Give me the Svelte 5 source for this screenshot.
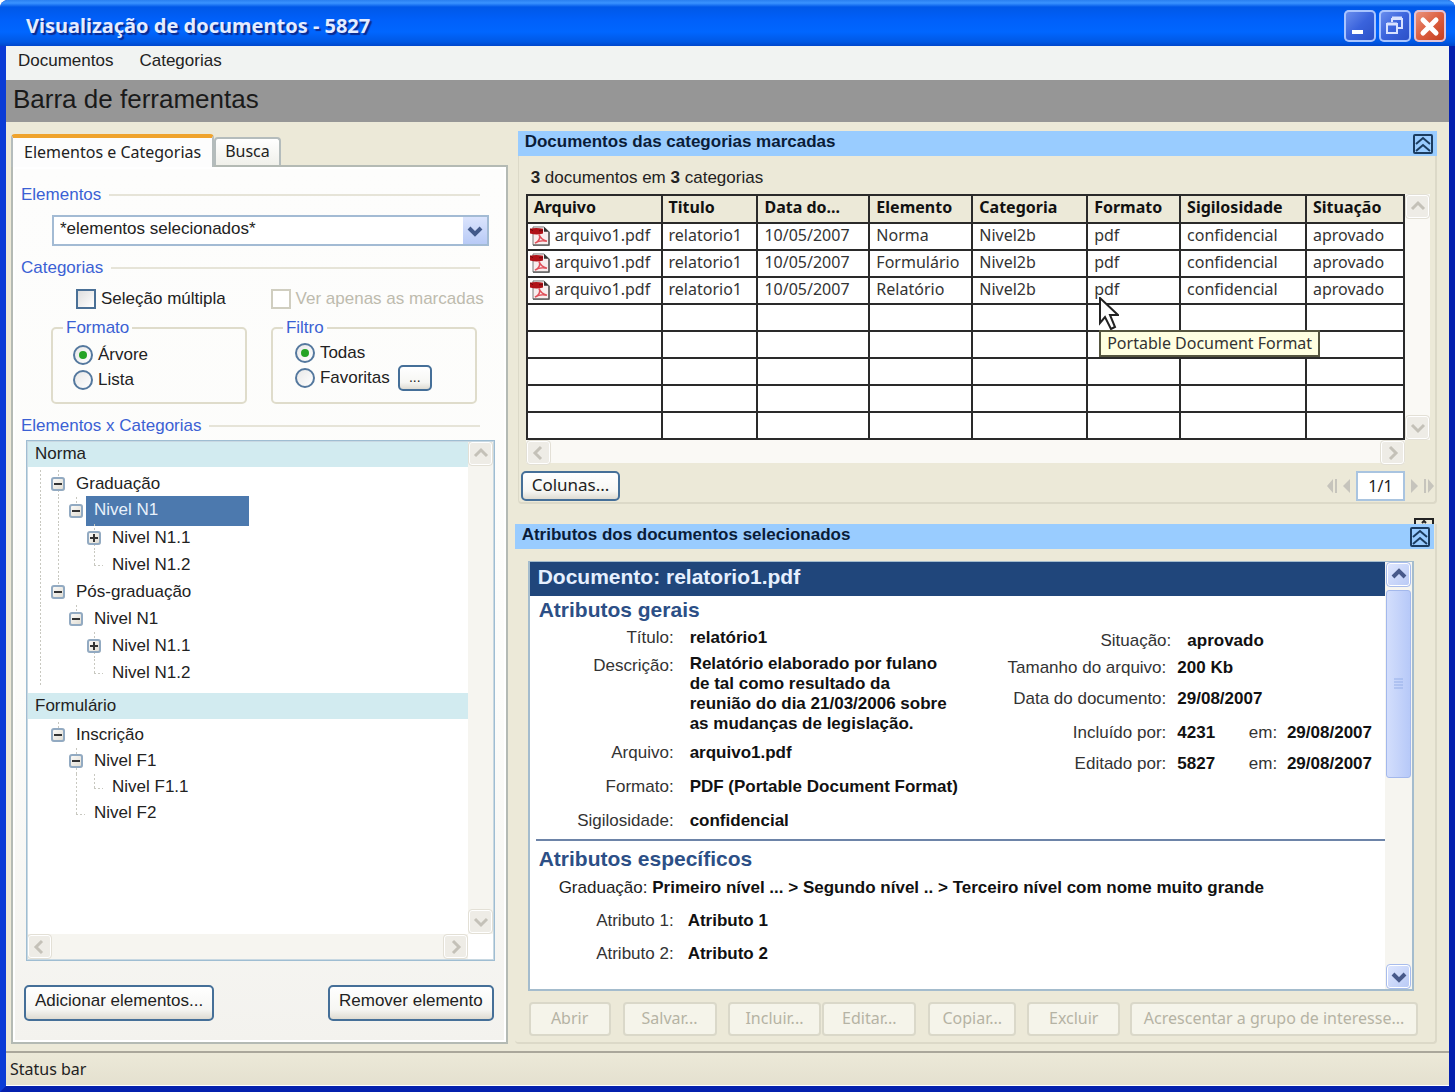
<script>
  const menus = ["Documentos", "Categorias"];

  // guide codes: "|" line, "L" corner, "m"/"p" toggle, "M"/"P" toggle whose line goes on below
  const groups = [
    {
      name: "Norma",
      rows: [
        { guides: "|M", label: "Graduação" },
        { guides: "||m", label: "Nivel N1", selected: true },
        { guides: "|| P", label: "Nivel N1.1" },
        { guides: "|| L", label: "Nivel N1.2" },
        { guides: "|m", label: "Pós-graduação" },
        { guides: "| m", label: "Nivel N1" },
        { guides: "|  P", label: "Nivel N1.1" },
        { guides: "|  L", label: "Nivel N1.2" },
      ],
    },
    {
      name: "Formulário",
      compact: true,
      rows: [
        { guides: " m", label: "Inscrição" },
        { guides: "  M", label: "Nivel F1" },
        { guides: "  |L", label: "Nivel F1.1" },
        { guides: "  L", label: "Nivel F2" },
      ],
    },
  ];

  const columns = [
    { title: "Arquivo", width: 135 },
    { title: "Titulo", width: 96 },
    { title: "Data do...", width: 112 },
    { title: "Elemento", width: 103 },
    { title: "Categoria", width: 115 },
    { title: "Formato", width: 93 },
    { title: "Sigilosidade", width: 126 },
    { title: "Situação", width: 98 },
  ];
  const totalWidth = columns.reduce((sum, c) => sum + c.width, 0);

  const docs = ["Norma", "Formulário", "Relatório"].map((elemento) => [
    "arquivo1.pdf",
    "relatorio1",
    "10/05/2007",
    elemento,
    "Nivel2b",
    "pdf",
    "confidencial",
    "aprovado",
  ]);
  const emptyRows = [1, 2, 3, 4, 5];

  const actions = [
    { label: "Abrir", width: 82, gap: 12 },
    { label: "Salvar...", width: 94, gap: 11 },
    { label: "Incluir...", width: 94, gap: 1 },
    { label: "Editar...", width: 94, gap: 12 },
    { label: "Copiar...", width: 88, gap: 11 },
    { label: "Excluir", width: 93, gap: 10 },
    { label: "Acrescentar a grupo de interesse...", width: 288, gap: 0 },
  ];

  let multiple = $state(false);
  let format = $state("arvore");
  let filter = $state("todas");
  let page = $state("1/1");

  const arrows = {
    up: "M6 14l6-6 6 6",
    down: "M6 9l6 6 6-6",
    left: "M14 6l-6 6 6 6",
    right: "M9 6l6 6-6 6",
  };
</script>

{#snippet scrollButton(dir, active)}
  <button class="scroll-btn" class:active aria-label={"Rolar " + dir}>
    <svg width="24" height="24" viewBox="0 0 24 24"><path d={arrows[dir]} /></svg>
  </button>
{/snippet}

{#snippet collapse()}
  <button class="collapse" aria-label="Recolher">
    <svg width="20" height="20" viewBox="0 0 20 20">
      <rect x="1" y="1" width="18" height="18" rx="1" />
      <path d="M3 10l7-6 7 6M3 17l7-6 7 6" />
    </svg>
  </button>
{/snippet}

{#snippet guide(code)}
  {#if "mMpP".includes(code)}
    <span class="cell toggle-cell" class:below={code === "M" || code === "P"}>
      <button class="toggle" aria-label="Expandir ou recolher">
        <svg width="14" height="14" viewBox="0 0 14 14">
          <path d={code.toLowerCase() === "p" ? "M3 7h8M7 3v8" : "M3 7h8"} />
        </svg>
      </button>
    </span>
  {:else}
    <span class="cell" class:line={code === "|"} class:corner={code === "L"}></span>
  {/if}
{/snippet}

{#snippet pdfIcon()}
  <svg class="pdf" width="21" height="20" viewBox="0 0 21 21" preserveAspectRatio="none">
    <path d="M4 1h11l5 5v14H4z" fill="#f8eeee" stroke="#777" />
    <path d="M20 6v14H4" fill="none" stroke="#555" stroke-width="1.4" />
    <path d="M15 1l5 5h-5z" fill="#333" />
    <path d="M1 3q6-2 13 0v5q-6 2-13 0z" fill="#b01218" />
    <path d="M1 3l3 2M10 5h4" stroke="#6d0a0d" />
    <path d="M10 9c2 3 0 7-4 9 4-3 8-3 12-2-4-1-7-4-8-7z" fill="none" stroke="#e0525c" stroke-width="1.6" />
  </svg>
{/snippet}

<div class="window">
  <header class="titlebar">
    <h1>Visualização de documentos - 5827</h1>
    <button class="win-btn" aria-label="Minimizar">
      <svg width="32" height="32" viewBox="0 0 32 32"><path d="M8 22h11" stroke="#fff" stroke-width="4" /></svg>
    </button>
    <button class="win-btn" aria-label="Restaurar">
      <svg width="32" height="32" viewBox="0 0 32 32" fill="none" stroke="#d8e2ff">
        <path d="M13 12V9h10v9h-4" stroke-width="2" />
        <path d="M13 8h10" stroke-width="3" />
        <rect x="8" y="14" width="10" height="9" stroke-width="2" />
        <path d="M8 14h10" stroke-width="3" />
      </svg>
    </button>
    <button class="win-btn close" aria-label="Fechar">
      <svg width="32" height="32" viewBox="0 0 32 32"><path d="M9 10l13 13M22 10L9 23" stroke="#fff" stroke-width="5" stroke-linecap="round" /></svg>
    </button>
  </header>

  <nav class="menubar">
    {#each menus as menu}
      <button>{menu}</button>
    {/each}
  </nav>
  <div class="toolbar">Barra de ferramentas</div>

  <main>
    <aside>
      <div class="tabs" role="tablist">
        <button class="tab current" role="tab" aria-selected="true">Elementos e Categorias</button>
        <button class="tab" role="tab" aria-selected="false">Busca</button>
      </div>
      <div class="tab-panel">
        <h2 class="group-title"><label for="elementos">Elementos</label></h2>
        <div class="select">
          <select id="elementos">
            <option>*elementos selecionados*</option>
          </select>
          <svg width="24" height="27" viewBox="0 0 24 27"><path d="M6 11l6 6 6-6" /></svg>
        </div>

        <h2 class="group-title">Categorias</h2>
        <div class="checks">
          <label><input type="checkbox" bind:checked={multiple} />Seleção múltipla</label>
          <label class="off"><input type="checkbox" disabled />Ver apenas as marcadas</label>
        </div>
        <div class="boxes">
          <fieldset class="format">
            <legend>Formato</legend>
            <label><input type="radio" value="arvore" bind:group={format} />Árvore</label>
            <label><input type="radio" value="lista" bind:group={format} />Lista</label>
          </fieldset>
          <fieldset class="filter">
            <legend>Filtro</legend>
            <label><input type="radio" value="todas" bind:group={filter} />Todas</label>
            <div class="favorites">
              <label><input type="radio" value="favoritas" bind:group={filter} />Favoritas</label>
              <button class="btn more">...</button>
            </div>
          </fieldset>
        </div>

        <h2 class="group-title">Elementos x Categorias</h2>
        <div class="tree">
          <div class="tree-body">
            {#each groups as group}
              <h3>{group.name}</h3>
              <ul class:compact={group.compact}>
                {#each group.rows as row}
                  <li>
                    {#each row.guides as code}
                      {@render guide(code)}
                    {/each}
                    <span class="node" class:selected={row.selected}>{row.label}</span>
                  </li>
                {/each}
              </ul>
            {/each}
          </div>
          <div class="vscroll">
            {@render scrollButton("up", false)}
            {@render scrollButton("down", false)}
          </div>
          <div class="hscroll">
            {@render scrollButton("left", false)}
            {@render scrollButton("right", false)}
          </div>
        </div>

        <div class="tree-actions">
          <button class="btn">Adicionar elementos...</button>
          <button class="btn">Remover elemento</button>
        </div>
      </div>
    </aside>

    <div class="content">
      <section class="documents">
        <header class="bar">
          <h2>Documentos das categorias marcadas</h2>
          {@render collapse()}
        </header>
        <p class="count"><b>3</b> documentos em <b>3</b> categorias</p>
        <div class="grid">
          <table>
            <colgroup>
              {#each columns as col}
                <col style="width: {(col.width / totalWidth) * 100}%" />
              {/each}
            </colgroup>
            <thead>
              <tr>
                {#each columns as col}
                  <th>{col.title}</th>
                {/each}
              </tr>
            </thead>
            <tbody>
              {#each docs as doc, r}
                <tr>
                  {#each doc as value, c}
                    <td class:file={c === 0} class:hovered={r === 2 && c === 5}>
                      {#if c === 0}{@render pdfIcon()}{/if}{value}
                      {#if r === 2 && c === 5}
                        <svg class="cursor" width="20" height="33" viewBox="0 0 20 33">
                          <path d="M1 1v25l5-6 6 12 4-2-5-12h8z" />
                        </svg>
                        <span class="tooltip" role="tooltip">Portable Document Format</span>
                      {/if}
                    </td>
                  {/each}
                </tr>
              {/each}
              {#each emptyRows as n}
                <tr>
                  {#each columns as col}
                    <td></td>
                  {/each}
                </tr>
              {/each}
            </tbody>
          </table>
          <div class="vscroll">
            {@render scrollButton("up", false)}
            {@render scrollButton("down", false)}
          </div>
          <div class="hscroll">
            {@render scrollButton("left", false)}
            {@render scrollButton("right", false)}
          </div>
        </div>
        <footer class="grid-footer">
          <button class="btn columns">Colunas...</button>
          <div class="pager">
            <button aria-label="Primeira">
              <svg width="10" height="14" viewBox="0 0 10 14"><path d="M6 0v14L0 7zM8 0h2v14H8z" /></svg>
            </button>
            <button aria-label="Anterior">
              <svg width="7" height="14" viewBox="0 0 7 14"><path d="M7 0v14L0 7z" /></svg>
            </button>
            <input aria-label="Página" bind:value={page} />
            <button aria-label="Próxima">
              <svg width="7" height="14" viewBox="0 0 7 14"><path d="M0 0v14l7-7z" /></svg>
            </button>
            <button aria-label="Última">
              <svg width="10" height="14" viewBox="0 0 10 14"><path d="M0 0h2v14H0zM4 0v14l6-7z" /></svg>
            </button>
          </div>
        </footer>
      </section>

      <section class="attributes">
        <svg class="tucked" width="20" height="6" viewBox="0 0 20 6">
          <path d="M1 6V1h18v5M8 5l2-2 2 2" />
        </svg>
        <header class="bar">
          <h2>Atributos dos documentos selecionados</h2>
          {@render collapse()}
        </header>
        <div class="viewer">
          <div class="sheet">
            <h3>Documento: relatorio1.pdf</h3>
            <h4>Atributos gerais</h4>
            <div class="general">
              <dl class="main-attrs">
                <dt>Título:</dt><dd>relatório1</dd>
                <dt>Descrição:</dt>
                <dd class="long">Relatório elaborado por fulano de tal como resultado da reunião do dia 21/03/2006 sobre as mudanças de legislação.</dd>
                <dt>Arquivo:</dt><dd>arquivo1.pdf</dd>
                <dt>Formato:</dt><dd>PDF (Portable Document Format)</dd>
                <dt>Sigilosidade:</dt><dd>confidencial</dd>
              </dl>
              <div class="side-attrs">
                <dl class="status"><dt>Situação:</dt><dd>aprovado</dd></dl>
                <dl>
                  <dt>Tamanho do arquivo:</dt><dd>200 Kb</dd>
                  <dt>Data do documento:</dt><dd>29/08/2007</dd>
                  <dt>Incluído por:</dt><dd>4231 <span>em:</span> 29/08/2007</dd>
                  <dt>Editado por:</dt><dd>5827 <span>em:</span> 29/08/2007</dd>
                </dl>
              </div>
            </div>
            <hr />
            <h4>Atributos específicos</h4>
            <p class="path">Graduação: <b>Primeiro nível ... &gt; Segundo nível .. &gt; Terceiro nível com nome muito grande</b></p>
            <dl class="specific">
              <dt>Atributo 1:</dt><dd>Atributo 1</dd>
              <dt>Atributo 2:</dt><dd>Atributo 2</dd>
            </dl>
          </div>
          <div class="vscroll">
            {@render scrollButton("up", true)}
            <div class="thumb">
              <svg width="10" height="12" viewBox="0 0 10 12"><path d="M0 1h9M0 4h9M0 7h9M0 10h9" /></svg>
            </div>
            {@render scrollButton("down", true)}
          </div>
        </div>
        <footer class="actions">
          {#each actions as action}
            <button disabled style="flex: {action.width} 1 {action.width}px; margin-right: {action.gap}px">{action.label}</button>
          {/each}
        </footer>
      </section>
    </div>
  </main>

  <footer class="statusbar">Status bar</footer>
</div>

<style>
  :global(body) {
    margin: 0;
    background: #fff;
  }

  .window {
    --ui: "Noto Sans", "Open Sans", sans-serif;
    box-sizing: border-box;
    display: flex;
    flex-direction: column;
    min-height: 100vh;
    border: solid #0a3bd6;
    border-width: 0 6px 6px;
    border-right-color: #0420ae;
    border-bottom-color: #0420ae;
    border-radius: 8px 8px 0 0;
    background: #ece9d8;
    color: #222;
    font: 17px/20px "Liberation Sans", Arial, sans-serif;
  }

  .window :global(*) {
    box-sizing: border-box;
  }

  h1, h2, h3, h4, p, ul, dl, dd {
    margin: 0;
    padding: 0;
  }

  button, input, select {
    margin: 0;
    padding: 0;
    border: 0;
    background: none;
    color: inherit;
    font: inherit;
  }

  svg {
    display: block;
    flex: none;
  }

  .titlebar {
    display: flex;
    align-items: center;
    gap: 3px;
    height: 46px;
    margin: 0 -6px;
    padding: 6px 9px 0 26px;
    border-radius: 8px 8px 0 0;
    background: linear-gradient(#2a7ff0 0, #3a93ff 3px, #0058e8 7px, #0060fa 20px, #0066ff 32px, #0058e4 42px, #0047cc 46px);
  }

  .titlebar h1 {
    flex: 1;
    color: #e4ecff;
    font: bold 20px/28px var(--ui);
    text-shadow: 2px 2px 1px #0a2a90;
  }

  .win-btn {
    width: 32px;
    height: 32px;
    border-radius: 5px;
    background: linear-gradient(135deg, #6f93f0, #3a63dc 50%, #2a4ec4);
    box-shadow: inset 0 0 0 2px #a8c4ff;
  }

  .win-btn.close {
    background: linear-gradient(135deg, #ec9a84, #dc5f40 50%, #c03a1c);
    box-shadow: inset 0 0 0 2px #e0c4d8;
  }

  .menubar {
    display: flex;
    gap: 26px;
    height: 34px;
    padding: 0 12px 4px;
    background: #f1f3f2;
  }

  .toolbar {
    height: 42px;
    padding-left: 7px;
    background: #969696;
    color: #1a1a1a;
    font-size: 26px;
    line-height: 39px;
  }

  main {
    flex: 1;
    display: grid;
    grid-template-columns: 35fr 65fr;
    gap: 7px;
    padding: 9px 12px 7px 5px;
  }

  aside {
    display: flex;
    flex-direction: column;
    padding-top: 3px;
  }

  .tabs {
    display: flex;
    align-items: flex-end;
  }

  .tab {
    height: 28px;
    padding: 0 9px 2px;
    border: 2px solid #b4bcbc;
    border-bottom: 0;
    border-radius: 4px 4px 0 0;
    background: linear-gradient(#fff, #f0f0ea);
    font: 16px/22px var(--ui);
  }

  .tab.current {
    position: relative;
    height: 33px;
    margin-bottom: -2px;
    padding: 0 11px 2px;
    border-top: 4px solid #efa32c;
    background: #fdfdfd;
  }

  .tab-panel {
    flex: 1;
    display: flex;
    flex-direction: column;
    padding: 18px 11px 21px 8px;
    border: 2px solid #b4bab4;
    background: linear-gradient(#fdfdfc, #fcfcfa 60%, #f3f2ee);
    box-shadow: inset 0 0 0 2px #fff;
  }

  .group-title {
    display: flex;
    align-items: center;
    gap: 8px;
    margin-right: 15px;
    color: #3b61d4;
    font-size: 17px;
    font-weight: normal;
    line-height: 20px;
  }

  .group-title::after {
    content: "";
    flex: 1;
    border-top: 2px solid #e6e4d8;
  }

  .select {
    position: relative;
    margin: 10px 6px 12px 31px;
  }

  .select select {
    width: 100%;
    height: 31px;
    padding: 0 30px 3px 6px;
    border: 2px solid #a3bbd4;
    background: #fff;
    appearance: none;
  }

  .select svg {
    position: absolute;
    top: 2px;
    right: 2px;
    background: linear-gradient(#dbe4fd, #b8caf6);
    pointer-events: none;
  }

  .select path {
    fill: none;
    stroke: #42598a;
    stroke-width: 4;
  }

  .checks, .checks label, .boxes label {
    display: flex;
    align-items: center;
  }

  .checks {
    justify-content: space-between;
    margin: 11px 11px 9px 55px;
  }

  .checks label {
    gap: 5px;
  }

  .checks .off {
    color: #bdbbae;
  }

  input[type="checkbox"] {
    width: 20px;
    height: 20px;
    border: 2px solid #4a7096;
    background: linear-gradient(135deg, #dedede, #fff);
    appearance: none;
  }

  input[type="checkbox"]:disabled {
    border-color: #d0cec0;
    background: #fff;
  }

  input[type="checkbox"]:checked {
    background: #21a121;
  }

  .boxes {
    display: flex;
    gap: 24px;
    margin: 0 18px 12px 30px;
  }

  fieldset {
    flex: 196;
    height: 86px;
    min-width: 0;
    margin: 0;
    padding: 4px 0 0 20px;
    border: 2px solid #dfdccb;
    border-radius: 5px;
  }

  .filter {
    flex: 205;
    padding: 2px 0 0 22px;
  }

  legend {
    margin-left: -10px;
    padding: 0 3px;
    color: #3b61d4;
  }

  .filter legend {
    margin-left: -12px;
  }

  .boxes label {
    gap: 5px;
    height: 25px;
  }

  .favorites {
    display: flex;
    align-items: center;
    gap: 8px;
    height: 25px;
  }

  input[type="radio"] {
    display: grid;
    place-items: center;
    width: 20px;
    height: 20px;
    border: 2px solid #54789e;
    border-radius: 50%;
    background: linear-gradient(135deg, #e8e8e8, #fff);
    appearance: none;
  }

  input[type="radio"]:checked::before {
    content: "";
    width: 8px;
    height: 8px;
    border-radius: 50%;
    background: #25a325;
  }

  .btn {
    height: 36px;
    padding: 0 9px 4px;
    border: 2px solid #456f98;
    border-radius: 5px;
    background: linear-gradient(#fff, #f6f6f3 70%, #dedbd2);
  }

  .btn.more {
    width: 34px;
    height: 26px;
    padding: 0 0 6px;
    font-size: 14px;
  }

  .tree {
    flex: 1;
    display: grid;
    grid-template: 1fr 26px / 1fr 26px;
    margin: 4px 0 0 5px;
    border: 1px solid #9fbdd2;
    outline: 1px solid #c8d8e2;
    outline-offset: -2px;
    background: #fff;
  }

  .tree h3 {
    height: 26px;
    padding-left: 8px;
    background: #d2ebf0;
    font-size: 17px;
    font-weight: normal;
    line-height: 25px;
  }

  .tree ul {
    padding: 3px 0 7px 4px;
    list-style: none;
  }

  .tree li {
    display: flex;
    align-items: center;
    height: 27px;
  }

  .tree .compact li {
    height: 26px;
  }

  .cell {
    align-self: stretch;
    display: grid;
    place-items: center;
    width: 18px;
    background: repeating-linear-gradient(#c8c8c0 0 2px, transparent 2px 4px) center / 1px 100% no-repeat;
  }

  .cell:not(.line):not(.corner):not(.toggle-cell) {
    background: none;
  }

  .cell.corner {
    background:
      repeating-linear-gradient(#c8c8c0 0 2px, transparent 2px 4px) 9px 0 / 1px 14px no-repeat,
      repeating-linear-gradient(90deg, #c8c8c0 0 2px, transparent 2px 4px) 9px 14px / 9px 1px no-repeat;
  }

  .toggle-cell {
    background-position: 9px 0;
    background-size: 1px 13px;
  }

  .toggle-cell.below {
    background-size: 1px 100%;
  }

  .toggle {
    width: 14px;
    height: 14px;
    border-radius: 3px;
    background: linear-gradient(135deg, #fff, #ddd8cc);
    box-shadow: inset 0 0 0 2px #92aac2;
  }

  .toggle path {
    stroke: #333;
    stroke-width: 2;
  }

  .node {
    display: flex;
    align-items: center;
    padding-left: 9px;
  }

  .node.selected {
    width: 163px;
    height: 30px;
    margin-left: 1px;
    padding: 0 0 2px 8px;
    background: #4c79ae;
    color: #e8f1fb;
  }

  .tree-actions {
    display: flex;
    justify-content: space-between;
    margin: 24px 1px 0 3px;
  }

  .vscroll, .hscroll {
    display: flex;
    justify-content: space-between;
    background: #f6f5f0;
  }

  .vscroll {
    flex-direction: column;
  }

  .scroll-btn {
    display: grid;
    place-items: center;
    width: 25px;
    height: 25px;
    border: 1px solid #e3e0d6;
    border-radius: 4px;
    background: #eeece6;
    box-shadow: inset 0 0 0 1px #fff;
  }

  .scroll-btn path {
    fill: none;
    stroke: #c4c1b8;
    stroke-width: 3;
  }

  .scroll-btn.active {
    border-color: #a8bcec;
    background: linear-gradient(135deg, #dfe7ff, #b8c9f5);
  }

  .scroll-btn.active path {
    stroke: #47598a;
    stroke-width: 4;
  }

  .content {
    display: flex;
    flex-direction: column;
    gap: 20px;
    min-width: 0;
  }

  .documents {
    margin-left: 3px;
    box-shadow: inset 1px 0 0 #dcd9c8;
  }

  .documents, .attributes {
    border: solid #dcd9c8;
    border-width: 0 2px 2px 0;
    border-radius: 0 0 4px 4px;
  }

  .attributes {
    position: relative;
    flex: 1;
    display: flex;
    flex-direction: column;
  }

  .bar {
    display: flex;
    align-items: center;
    justify-content: space-between;
    height: 25px;
    margin-right: -2px;
    padding: 0 4px 0 7px;
    background: #99ccff;
  }

  .attributes .bar {
    position: relative;
    margin-right: 1px;
  }

  .bar h2 {
    padding-bottom: 3px;
    color: #0a1c38;
    font-size: 17px;
    line-height: 20px;
  }

  .collapse rect, .collapse path {
    fill: none;
    stroke: #1b3c60;
    stroke-width: 2;
  }

  .tucked {
    position: absolute;
    top: -6px;
    right: 1px;
  }

  .tucked path {
    fill: none;
    stroke: #222;
    stroke-width: 2;
  }

  .count {
    padding: 12px 13px 6px;
  }

  .grid {
    display: grid;
    grid-template: auto 23px / 1fr 25px;
    margin: 0 5px 0 8px;
  }

  table {
    width: 100%;
    border-collapse: collapse;
    table-layout: fixed;
    font: 16px/20px var(--ui);
  }

  th, td {
    height: 27px;
    padding: 0 0 4px 6px;
    border: 2px solid #2a2a2a;
    text-align: left;
    white-space: nowrap;
  }

  td {
    background: #fff;
    color: #333;
  }

  th {
    height: 28px;
    color: #111;
  }

  td.file {
    padding: 0 0 2px 1px;
  }

  .pdf {
    display: inline-block;
    margin-right: 5px;
    vertical-align: -5px;
  }

  td.hovered {
    position: relative;
  }

  .cursor {
    position: absolute;
    z-index: 2;
    top: 19px;
    left: 11px;
  }

  .cursor path {
    fill: #fff;
    stroke: #222;
    stroke-width: 2;
  }

  .tooltip {
    position: absolute;
    z-index: 1;
    top: 52px;
    left: 11px;
    height: 27px;
    padding: 0 6px;
    border: 2px solid #55553f;
    background: #ffffe1;
    line-height: 22px;
  }

  .grid .hscroll, .grid .vscroll {
    background: #faf9f5;
  }

  .grid-footer {
    display: flex;
    align-items: center;
    justify-content: space-between;
    padding: 8px 1px 1px 3px;
  }

  .columns {
    height: 30px;
    padding: 0 9px 2px;
    font: 17px/22px var(--ui);
  }

  .pager {
    display: flex;
    align-items: center;
    gap: 6px;
  }

  .pager path {
    fill: #c6c4bc;
  }

  .pager input {
    width: 49px;
    height: 30px;
    border: 2px solid #a9c4e0;
    background: #fff;
    font: 16px/22px var(--ui);
    text-align: center;
  }

  .viewer {
    flex: 1;
    display: grid;
    grid-template-columns: 1fr 27px;
    margin: 12px 21px 0 13px;
    border: solid #a4bccd;
    border-width: 1px 2px 2px;
    background: #fff;
  }

  .sheet h3 {
    height: 34px;
    padding-left: 8px;
    background: #20467b;
    color: #e6f0ff;
    font-size: 21px;
    line-height: 30px;
  }

  .sheet h4 {
    padding-left: 9px;
    color: #2c4f86;
    font-size: 21px;
    line-height: 28px;
  }

  .general {
    display: flex;
    justify-content: space-between;
  }

  dl {
    display: grid;
    grid-template-columns: auto 1fr;
    align-items: center;
  }

  dt {
    color: #333;
    text-align: right;
  }

  dd, .path b {
    color: #111;
    font-weight: bold;
  }

  .main-attrs {
    grid-template: 28px 84px 34px 33px 36px / 144px 270px;
    column-gap: 16px;
  }

  .main-attrs .long {
    padding-right: 8px;
  }

  .main-attrs dt:nth-of-type(2) {
    align-self: start;
    padding-top: 4px;
  }

  .side-attrs {
    padding: 3px 13px 0 0;
  }

  .side-attrs dl {
    grid-template: 26px 36px 32px 30px / 165px auto;
    column-gap: 11px;
  }

  .side-attrs .status {
    grid-template: 28px / 170px auto;
    column-gap: 16px;
  }

  dd span {
    padding: 0 5px 0 29px;
    color: #333;
    font-weight: normal;
  }

  hr {
    margin: 0 0 4px 6px;
    border: 0;
    border-top: 2px solid #6d84a8;
  }

  .path {
    padding: 5px 0 6px 29px;
  }

  .specific {
    grid-template: 33px 33px / 144px 1fr;
    column-gap: 14px;
  }

  .viewer .vscroll {
    justify-content: flex-start;
    padding: 0 0 0 1px;
  }

  .viewer .scroll-btn:last-child {
    margin-top: auto;
  }

  .thumb {
    flex: 0 0 44%;
    display: grid;
    place-items: center;
    width: 25px;
    margin-top: 3px;
    border: 1px solid #a3b8ec;
    border-radius: 3px;
    background: linear-gradient(90deg, #d3defc, #b7c9f8);
  }

  .thumb path {
    stroke: #96afe8;
  }

  .actions {
    display: flex;
    margin: 11px 17px 6px 14px;
  }

  .actions button {
    height: 34px;
    min-width: 0;
    padding-bottom: 3px;
    border: 2px solid #dad8c9;
    border-radius: 4px;
    background: #f5f4ea;
    color: #b5b3a4;
    font: 16px/22px var(--ui);
    white-space: nowrap;
  }

  .statusbar {
    height: 35px;
    padding: 5px 4px;
    border-top: 2px solid #aaa79b;
    background: linear-gradient(#ece9d8, #e4e0cf);
    box-shadow: inset 0 -1px 0 #fff;
    font: 16px/22px var(--ui);
  }
</style>
